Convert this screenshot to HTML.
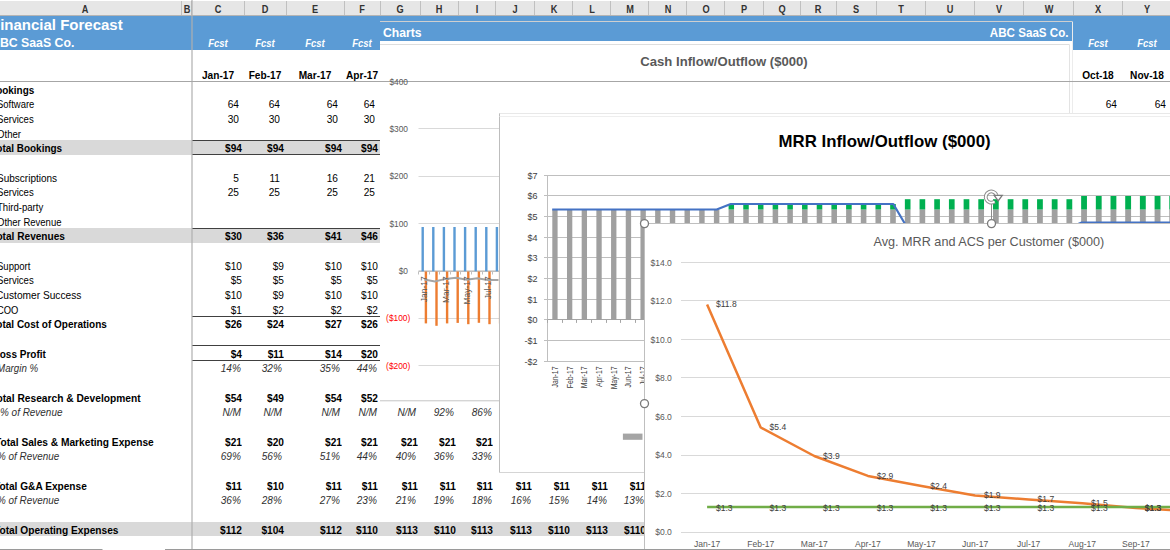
<!DOCTYPE html>
<html><head><meta charset="utf-8"><style>
*{margin:0;padding:0}
body{width:1170px;height:550px;overflow:hidden;position:relative;background:#fff;font-family:"Liberation Sans",sans-serif}
.ch{position:absolute;top:3px;width:40px;text-align:center;font-size:10px;line-height:13px;color:#333;font-weight:bold;transform:scaleX(.92)}
.t{position:absolute;white-space:nowrap;font-size:11px;line-height:14.667px;color:#000;transform:scaleX(.92);transform-origin:left center}
.c{position:absolute;width:60px;text-align:center;white-space:nowrap;font-size:11px;line-height:14px;transform:scaleX(.92)}
.r{position:absolute;width:80px;text-align:right;white-space:nowrap;font-size:11px;line-height:14.667px;color:#000;transform:scaleX(.92);transform-origin:right center}
.b{font-weight:bold}
.it{font-style:italic;color:#303030}
</style></head>
<body>
<div style="position:absolute;left:0;top:0;width:1170px;height:16px;background:#e6e6e6;border-top:1px solid #fff;box-sizing:border-box"></div>
<div style="position:absolute;left:0;top:15px;width:1170px;height:1px;background:#b4b4b4"></div>
<div style="position:absolute;left:181.0px;top:1px;width:1px;height:14px;background:#c0c0c0"></div>
<div class="ch" style="left:64.8px">A</div>
<div style="position:absolute;left:191.0px;top:1px;width:1px;height:14px;background:#c0c0c0"></div>
<div class="ch" style="left:166.5px">B</div>
<div style="position:absolute;left:244.1px;top:1px;width:1px;height:14px;background:#c0c0c0"></div>
<div class="ch" style="left:198.1px">C</div>
<div style="position:absolute;left:285.7px;top:1px;width:1px;height:14px;background:#c0c0c0"></div>
<div class="ch" style="left:245.4px">D</div>
<div style="position:absolute;left:343.5px;top:1px;width:1px;height:14px;background:#c0c0c0"></div>
<div class="ch" style="left:295.1px">E</div>
<div style="position:absolute;left:380.0px;top:1px;width:1px;height:14px;background:#c0c0c0"></div>
<div class="ch" style="left:342.2px">F</div>
<div style="position:absolute;left:419.5px;top:1px;width:1px;height:14px;background:#c0c0c0"></div>
<div class="ch" style="left:380.2px">G</div>
<div style="position:absolute;left:457.5px;top:1px;width:1px;height:14px;background:#c0c0c0"></div>
<div class="ch" style="left:419.0px">H</div>
<div style="position:absolute;left:495.1px;top:1px;width:1px;height:14px;background:#c0c0c0"></div>
<div class="ch" style="left:456.8px">I</div>
<div style="position:absolute;left:534.0px;top:1px;width:1px;height:14px;background:#c0c0c0"></div>
<div class="ch" style="left:495.0px">J</div>
<div style="position:absolute;left:572.0px;top:1px;width:1px;height:14px;background:#c0c0c0"></div>
<div class="ch" style="left:533.5px">K</div>
<div style="position:absolute;left:610.3px;top:1px;width:1px;height:14px;background:#c0c0c0"></div>
<div class="ch" style="left:571.6px">L</div>
<div style="position:absolute;left:647.9px;top:1px;width:1px;height:14px;background:#c0c0c0"></div>
<div class="ch" style="left:609.6px">M</div>
<div style="position:absolute;left:686.2px;top:1px;width:1px;height:14px;background:#c0c0c0"></div>
<div class="ch" style="left:647.5px">N</div>
<div style="position:absolute;left:724.1px;top:1px;width:1px;height:14px;background:#c0c0c0"></div>
<div class="ch" style="left:685.7px">O</div>
<div style="position:absolute;left:762.5px;top:1px;width:1px;height:14px;background:#c0c0c0"></div>
<div class="ch" style="left:723.8px">P</div>
<div style="position:absolute;left:799.5px;top:1px;width:1px;height:14px;background:#c0c0c0"></div>
<div class="ch" style="left:761.5px">Q</div>
<div style="position:absolute;left:836.2px;top:1px;width:1px;height:14px;background:#c0c0c0"></div>
<div class="ch" style="left:798.4px">R</div>
<div style="position:absolute;left:875.5px;top:1px;width:1px;height:14px;background:#c0c0c0"></div>
<div class="ch" style="left:836.4px">S</div>
<div style="position:absolute;left:925.1px;top:1px;width:1px;height:14px;background:#c0c0c0"></div>
<div class="ch" style="left:880.8px">T</div>
<div style="position:absolute;left:973.9px;top:1px;width:1px;height:14px;background:#c0c0c0"></div>
<div class="ch" style="left:930.0px">U</div>
<div style="position:absolute;left:1023.2px;top:1px;width:1px;height:14px;background:#c0c0c0"></div>
<div class="ch" style="left:979.0px">V</div>
<div style="position:absolute;left:1073.1px;top:1px;width:1px;height:14px;background:#c0c0c0"></div>
<div class="ch" style="left:1028.7px">W</div>
<div style="position:absolute;left:1122.3px;top:1px;width:1px;height:14px;background:#c0c0c0"></div>
<div class="ch" style="left:1078.2px">X</div>
<div class="ch" style="left:1127.4px">Y</div>
<div style="position:absolute;left:0;top:16px;width:1170px;height:34px;background:#5b9bd5"></div>
<div class="t" style="left:-9px;top:16px;font-size:15px;font-weight:bold;color:#fff;line-height:18px;transform:none">Financial Forecast</div>
<div class="t" style="left:-9px;top:36px;font-size:12.3px;font-weight:bold;color:#fff;line-height:14px;transform:none">ABC SaaS Co.</div>
<div class="c" style="left:188.1px;top:36px;color:#fff;font-style:italic;font-weight:bold;transform:scaleX(.86)">Fcst</div>
<div class="c" style="left:235.4px;top:36px;color:#fff;font-style:italic;font-weight:bold;transform:scaleX(.86)">Fcst</div>
<div class="c" style="left:285.1px;top:36px;color:#fff;font-style:italic;font-weight:bold;transform:scaleX(.86)">Fcst</div>
<div class="c" style="left:332.2px;top:36px;color:#fff;font-style:italic;font-weight:bold;transform:scaleX(.86)">Fcst</div>
<div class="c" style="left:1068.2px;top:36px;color:#fff;font-style:italic;font-weight:bold;transform:scaleX(.86)">Fcst</div>
<div class="c" style="left:1117.4px;top:36px;color:#fff;font-style:italic;font-weight:bold;transform:scaleX(.86)">Fcst</div>
<div class="c b" style="left:188.1px;top:68px">Jan-17</div>
<div class="c b" style="left:235.4px;top:68px">Feb-17</div>
<div class="c b" style="left:285.1px;top:68px">Mar-17</div>
<div class="c b" style="left:332.2px;top:68px">Apr-17</div>
<div class="c b" style="left:1068.2px;top:68px">Oct-18</div>
<div class="c b" style="left:1117.4px;top:68px">Nov-18</div>
<div style="position:absolute;left:0;top:81px;width:1170px;height:1px;background:#a6a6a6"></div>
<div style="position:absolute;left:0;top:140.2px;width:380.5px;height:14.67px;background:#d9d9d9"></div>
<div style="position:absolute;left:0;top:228.2px;width:380.5px;height:14.67px;background:#d9d9d9"></div>
<div style="position:absolute;left:0;top:521.5px;width:648.4px;height:14.67px;background:#d9d9d9"></div>
<div style="position:absolute;left:191.5px;top:139.7px;width:189.0px;height:1px;background:#404040"></div>
<div style="position:absolute;left:191.5px;top:227.7px;width:189.0px;height:1px;background:#404040"></div>
<div style="position:absolute;left:191.5px;top:315.7px;width:189.0px;height:1px;background:#404040"></div>
<div style="position:absolute;left:191.5px;top:345.0px;width:189.0px;height:1px;background:#404040"></div>
<div style="position:absolute;left:191.5px;top:154.3px;width:189.0px;height:1px;background:#404040"></div>
<div style="position:absolute;left:191.5px;top:359.7px;width:189.0px;height:1px;background:#404040"></div>
<div class="t b" style="left:-11.1px;top:82.5px;transform:scaleX(0.904)">Bookings</div>
<div class="t" style="left:-3px;top:97.2px;transform:scaleX(0.859)">Software</div>
<div class="r" style="left:158.6px;top:97.2px">64</div>
<div class="r" style="left:200.2px;top:97.2px">64</div>
<div class="r" style="left:258.0px;top:97.2px">64</div>
<div class="r" style="left:294.5px;top:97.2px">64</div>
<div class="t" style="left:-3px;top:111.8px;transform:scaleX(0.87)">Services</div>
<div class="r" style="left:158.6px;top:111.8px">30</div>
<div class="r" style="left:200.2px;top:111.8px">30</div>
<div class="r" style="left:258.0px;top:111.8px">30</div>
<div class="r" style="left:294.5px;top:111.8px">30</div>
<div class="t" style="left:-3px;top:126.5px;transform:scaleX(0.872)">Other</div>
<div class="t b" style="left:-9px;top:141.2px;transform:scaleX(0.904)">Total Bookings</div>
<div class="r b" style="left:162.1px;top:141.2px">$94</div>
<div class="r b" style="left:203.7px;top:141.2px">$94</div>
<div class="r b" style="left:261.5px;top:141.2px">$94</div>
<div class="r b" style="left:298.0px;top:141.2px">$94</div>
<div class="t" style="left:-3px;top:170.5px;transform:scaleX(0.91)">Subscriptions</div>
<div class="r" style="left:158.6px;top:170.5px">5</div>
<div class="r" style="left:200.2px;top:170.5px">11</div>
<div class="r" style="left:258.0px;top:170.5px">16</div>
<div class="r" style="left:294.5px;top:170.5px">21</div>
<div class="t" style="left:-3px;top:185.2px;transform:scaleX(0.87)">Services</div>
<div class="r" style="left:158.6px;top:185.2px">25</div>
<div class="r" style="left:200.2px;top:185.2px">25</div>
<div class="r" style="left:258.0px;top:185.2px">25</div>
<div class="r" style="left:294.5px;top:185.2px">25</div>
<div class="t" style="left:-3px;top:199.8px;transform:scaleX(0.869)">Third-party</div>
<div class="t" style="left:-3px;top:214.5px;transform:scaleX(0.864)">Other Revenue</div>
<div class="t b" style="left:-9px;top:229.2px;transform:scaleX(0.919)">Total Revenues</div>
<div class="r b" style="left:162.1px;top:229.2px">$30</div>
<div class="r b" style="left:203.7px;top:229.2px">$36</div>
<div class="r b" style="left:261.5px;top:229.2px">$41</div>
<div class="r b" style="left:298.0px;top:229.2px">$46</div>
<div class="t" style="left:-3px;top:258.5px;transform:scaleX(0.867)">Support</div>
<div class="r" style="left:162.1px;top:258.5px">$10</div>
<div class="r" style="left:203.7px;top:258.5px">$9</div>
<div class="r" style="left:261.5px;top:258.5px">$10</div>
<div class="r" style="left:298.0px;top:258.5px">$10</div>
<div class="t" style="left:-3px;top:273.2px;transform:scaleX(0.87)">Services</div>
<div class="r" style="left:162.1px;top:273.2px">$5</div>
<div class="r" style="left:203.7px;top:273.2px">$5</div>
<div class="r" style="left:261.5px;top:273.2px">$5</div>
<div class="r" style="left:298.0px;top:273.2px">$5</div>
<div class="t" style="left:-3.8px;top:287.8px;transform:scaleX(0.924)">Customer Success</div>
<div class="r" style="left:162.1px;top:287.8px">$10</div>
<div class="r" style="left:203.7px;top:287.8px">$9</div>
<div class="r" style="left:261.5px;top:287.8px">$10</div>
<div class="r" style="left:298.0px;top:287.8px">$10</div>
<div class="t" style="left:-3.2px;top:302.5px;transform:scaleX(0.854)">COO</div>
<div class="r" style="left:162.1px;top:302.5px">$1</div>
<div class="r" style="left:203.7px;top:302.5px">$2</div>
<div class="r" style="left:261.5px;top:302.5px">$2</div>
<div class="r" style="left:298.0px;top:302.5px">$2</div>
<div class="t b" style="left:-9.4px;top:317.2px;transform:scaleX(0.908)">Total Cost of Operations</div>
<div class="r b" style="left:162.1px;top:317.2px">$26</div>
<div class="r b" style="left:203.7px;top:317.2px">$24</div>
<div class="r b" style="left:261.5px;top:317.2px">$27</div>
<div class="r b" style="left:298.0px;top:317.2px">$26</div>
<div class="t b" style="left:-11.9px;top:346.5px;transform:scaleX(0.911)">Gross Profit</div>
<div class="r b" style="left:162.1px;top:346.5px">$4</div>
<div class="r b" style="left:203.7px;top:346.5px">$11</div>
<div class="r b" style="left:261.5px;top:346.5px">$14</div>
<div class="r b" style="left:298.0px;top:346.5px">$20</div>
<div class="t it" style="left:-3px;top:361.2px;transform:scaleX(0.887)">Margin %</div>
<div class="r it" style="left:160.6px;top:361.2px">14%</div>
<div class="r it" style="left:202.2px;top:361.2px">32%</div>
<div class="r it" style="left:260.0px;top:361.2px">35%</div>
<div class="r it" style="left:296.5px;top:361.2px">44%</div>
<div class="t b" style="left:-9px;top:390.5px;transform:scaleX(0.928)">Total Research &amp; Development</div>
<div class="r b" style="left:162.1px;top:390.5px">$54</div>
<div class="r b" style="left:203.7px;top:390.5px">$49</div>
<div class="r b" style="left:261.5px;top:390.5px">$54</div>
<div class="r b" style="left:298.0px;top:390.5px">$52</div>
<div class="t it" style="left:-0.3px;top:405.2px;transform:scaleX(0.904)">% of Revenue</div>
<div class="r it" style="left:160.6px;top:405.2px">N/M</div>
<div class="r it" style="left:202.2px;top:405.2px">N/M</div>
<div class="r it" style="left:260.0px;top:405.2px">N/M</div>
<div class="r it" style="left:296.5px;top:405.2px">N/M</div>
<div class="r it" style="left:336.0px;top:405.2px">N/M</div>
<div class="r it" style="left:374.0px;top:405.2px">92%</div>
<div class="r it" style="left:411.6px;top:405.2px">86%</div>
<div class="t b" style="left:-5.5px;top:434.5px;transform:scaleX(0.925)">Total Sales &amp; Marketing Expense</div>
<div class="r b" style="left:162.1px;top:434.5px">$21</div>
<div class="r b" style="left:203.7px;top:434.5px">$20</div>
<div class="r b" style="left:261.5px;top:434.5px">$21</div>
<div class="r b" style="left:298.0px;top:434.5px">$21</div>
<div class="r b" style="left:337.5px;top:434.5px">$21</div>
<div class="r b" style="left:375.5px;top:434.5px">$21</div>
<div class="r b" style="left:413.1px;top:434.5px">$21</div>
<div class="t it" style="left:-3.3px;top:449.2px;transform:scaleX(0.9)">% of Revenue</div>
<div class="r it" style="left:160.6px;top:449.2px">69%</div>
<div class="r it" style="left:202.2px;top:449.2px">56%</div>
<div class="r it" style="left:260.0px;top:449.2px">51%</div>
<div class="r it" style="left:296.5px;top:449.2px">44%</div>
<div class="r it" style="left:336.0px;top:449.2px">40%</div>
<div class="r it" style="left:374.0px;top:449.2px">36%</div>
<div class="r it" style="left:411.6px;top:449.2px">33%</div>
<div class="t b" style="left:-6.2px;top:478.5px;transform:scaleX(0.92)">Total G&amp;A Expense</div>
<div class="r b" style="left:162.1px;top:478.5px">$11</div>
<div class="r b" style="left:203.7px;top:478.5px">$10</div>
<div class="r b" style="left:261.5px;top:478.5px">$11</div>
<div class="r b" style="left:298.0px;top:478.5px">$11</div>
<div class="r b" style="left:337.5px;top:478.5px">$11</div>
<div class="r b" style="left:375.5px;top:478.5px">$11</div>
<div class="r b" style="left:413.1px;top:478.5px">$11</div>
<div class="r b" style="left:452.0px;top:478.5px">$11</div>
<div class="r b" style="left:490.0px;top:478.5px">$11</div>
<div class="r b" style="left:528.3px;top:478.5px">$11</div>
<div class="r b" style="left:565.9px;top:478.5px">$11</div>
<div class="t it" style="left:-3.3px;top:493.2px;transform:scaleX(0.9)">% of Revenue</div>
<div class="r it" style="left:160.6px;top:493.2px">36%</div>
<div class="r it" style="left:202.2px;top:493.2px">28%</div>
<div class="r it" style="left:260.0px;top:493.2px">27%</div>
<div class="r it" style="left:296.5px;top:493.2px">23%</div>
<div class="r it" style="left:336.0px;top:493.2px">21%</div>
<div class="r it" style="left:374.0px;top:493.2px">19%</div>
<div class="r it" style="left:411.6px;top:493.2px">18%</div>
<div class="r it" style="left:450.5px;top:493.2px">16%</div>
<div class="r it" style="left:488.5px;top:493.2px">15%</div>
<div class="r it" style="left:526.8px;top:493.2px">14%</div>
<div class="r it" style="left:564.4px;top:493.2px">13%</div>
<div class="t b" style="left:-6.1px;top:522.5px;transform:scaleX(0.923)">Total Operating Expenses</div>
<div class="r b" style="left:162.1px;top:522.5px">$112</div>
<div class="r b" style="left:203.7px;top:522.5px">$104</div>
<div class="r b" style="left:261.5px;top:522.5px">$112</div>
<div class="r b" style="left:298.0px;top:522.5px">$110</div>
<div class="r b" style="left:337.5px;top:522.5px">$113</div>
<div class="r b" style="left:375.5px;top:522.5px">$110</div>
<div class="r b" style="left:413.1px;top:522.5px">$113</div>
<div class="r b" style="left:452.0px;top:522.5px">$113</div>
<div class="r b" style="left:490.0px;top:522.5px">$110</div>
<div class="r b" style="left:528.3px;top:522.5px">$113</div>
<div class="r b" style="left:565.9px;top:522.5px">$110</div>
<div class="r" style="left:1036.8px;top:97.2px">64</div>
<div class="r" style="left:1086.0px;top:97.2px">64</div>
<div style="position:absolute;left:191px;top:0;width:1.5px;height:550px;background:rgba(175,175,175,.6)"></div>
<svg style="position:absolute;left:0;top:0" width="1170" height="550" font-family="Liberation Sans"><rect x="380.00" y="21.00" width="692.00" height="380.20" fill="#fff" stroke="none" stroke-width="1"/>
<line x1="380.00" y1="21.50" x2="1072.00" y2="21.50" stroke="#cfcfcf" stroke-width="1"/>
<rect x="380.00" y="22.00" width="692.00" height="19.00" fill="#5b9bd5" stroke="none" stroke-width="1"/>
<line x1="1072.50" y1="21.50" x2="1072.50" y2="113.00" stroke="#ececec" stroke-width="1"/>
<text transform="translate(383.00,37.20) scale(0.9,1)" font-size="13.5" fill="#fff" text-anchor="start" font-weight="bold" font-style="normal">Charts</text>
<text transform="translate(1068.50,37.20) scale(0.86,1)" font-size="13.5" fill="#fff" text-anchor="end" font-weight="bold" font-style="normal">ABC SaaS Co.</text>
<line x1="380.00" y1="44.50" x2="1069.50" y2="44.50" stroke="#dedede" stroke-width="1"/>
<line x1="1069.50" y1="44.50" x2="1069.50" y2="401.00" stroke="#e3e3e3" stroke-width="1"/>
<line x1="380.00" y1="400.50" x2="499.50" y2="400.50" stroke="#d5d5d5" stroke-width="1"/>
<line x1="380.00" y1="401.50" x2="499.50" y2="401.50" stroke="#eeeeee" stroke-width="1"/>
<line x1="0.00" y1="81.50" x2="1170.00" y2="81.50" stroke="#a6a6a6" stroke-width="1"/>
<text transform="translate(724.00,65.60)" font-size="13.1" fill="#595959" text-anchor="middle" font-weight="bold" font-style="normal">Cash Inflow/Outflow ($000)</text>
<text transform="translate(408.00,84.70) scale(0.93,1)" font-size="9" fill="#595959" text-anchor="end" font-weight="normal" font-style="normal">$400</text>
<line x1="418.50" y1="128.50" x2="1057.70" y2="128.50" stroke="#d9d9d9" stroke-width="1"/>
<text transform="translate(408.00,132.00) scale(0.93,1)" font-size="9" fill="#595959" text-anchor="end" font-weight="normal" font-style="normal">$300</text>
<line x1="418.50" y1="176.50" x2="1057.70" y2="176.50" stroke="#d9d9d9" stroke-width="1"/>
<text transform="translate(408.00,179.30) scale(0.93,1)" font-size="9" fill="#595959" text-anchor="end" font-weight="normal" font-style="normal">$200</text>
<line x1="418.50" y1="223.50" x2="1057.70" y2="223.50" stroke="#d9d9d9" stroke-width="1"/>
<text transform="translate(408.00,226.60) scale(0.93,1)" font-size="9" fill="#595959" text-anchor="end" font-weight="normal" font-style="normal">$100</text>
<line x1="418.50" y1="270.50" x2="1057.70" y2="270.50" stroke="#d9d9d9" stroke-width="1"/>
<text transform="translate(408.00,273.90) scale(0.93,1)" font-size="9" fill="#595959" text-anchor="end" font-weight="normal" font-style="normal">$0</text>
<line x1="418.50" y1="318.50" x2="1057.70" y2="318.50" stroke="#d9d9d9" stroke-width="1"/>
<text transform="translate(410.30,321.20) scale(0.93,1)" font-size="9" fill="#ff0000" text-anchor="end" font-weight="normal" font-style="normal">($100)</text>
<line x1="418.50" y1="365.50" x2="1057.70" y2="365.50" stroke="#d9d9d9" stroke-width="1"/>
<text transform="translate(410.30,368.50) scale(0.93,1)" font-size="9" fill="#ff0000" text-anchor="end" font-weight="normal" font-style="normal">($200)</text>
<line x1="418.50" y1="271.50" x2="1057.70" y2="271.50" stroke="#bfbfbf" stroke-width="1"/>
<line x1="418.50" y1="271.50" x2="418.50" y2="274.50" stroke="#bfbfbf" stroke-width="1"/>
<line x1="429.50" y1="271.50" x2="429.50" y2="274.50" stroke="#bfbfbf" stroke-width="1"/>
<line x1="439.50" y1="271.50" x2="439.50" y2="274.50" stroke="#bfbfbf" stroke-width="1"/>
<line x1="450.50" y1="271.50" x2="450.50" y2="274.50" stroke="#bfbfbf" stroke-width="1"/>
<line x1="460.50" y1="271.50" x2="460.50" y2="274.50" stroke="#bfbfbf" stroke-width="1"/>
<line x1="471.50" y1="271.50" x2="471.50" y2="274.50" stroke="#bfbfbf" stroke-width="1"/>
<line x1="482.50" y1="271.50" x2="482.50" y2="274.50" stroke="#bfbfbf" stroke-width="1"/>
<line x1="492.50" y1="271.50" x2="492.50" y2="274.50" stroke="#bfbfbf" stroke-width="1"/>
<line x1="503.50" y1="271.50" x2="503.50" y2="274.50" stroke="#bfbfbf" stroke-width="1"/>
<rect x="421.50" y="227.00" width="2.40" height="44.30" fill="#5b9bd5" stroke="none" stroke-width="1"/>
<rect x="424.70" y="271.50" width="2.40" height="51.90" fill="#ed7d31" stroke="none" stroke-width="1"/>
<rect x="432.10" y="227.00" width="2.40" height="44.30" fill="#5b9bd5" stroke="none" stroke-width="1"/>
<rect x="435.30" y="271.50" width="2.40" height="54.30" fill="#ed7d31" stroke="none" stroke-width="1"/>
<rect x="442.70" y="227.00" width="2.40" height="44.30" fill="#5b9bd5" stroke="none" stroke-width="1"/>
<rect x="445.90" y="271.50" width="2.40" height="51.90" fill="#ed7d31" stroke="none" stroke-width="1"/>
<rect x="453.30" y="227.00" width="2.40" height="44.30" fill="#5b9bd5" stroke="none" stroke-width="1"/>
<rect x="456.50" y="271.50" width="2.40" height="51.40" fill="#ed7d31" stroke="none" stroke-width="1"/>
<rect x="463.90" y="227.00" width="2.40" height="44.30" fill="#5b9bd5" stroke="none" stroke-width="1"/>
<rect x="467.10" y="271.50" width="2.40" height="52.70" fill="#ed7d31" stroke="none" stroke-width="1"/>
<rect x="474.50" y="227.00" width="2.40" height="44.30" fill="#5b9bd5" stroke="none" stroke-width="1"/>
<rect x="477.70" y="271.50" width="2.40" height="51.30" fill="#ed7d31" stroke="none" stroke-width="1"/>
<rect x="485.10" y="227.00" width="2.40" height="44.30" fill="#5b9bd5" stroke="none" stroke-width="1"/>
<rect x="488.30" y="271.50" width="2.40" height="52.70" fill="#ed7d31" stroke="none" stroke-width="1"/>
<rect x="495.70" y="227.00" width="2.40" height="44.30" fill="#5b9bd5" stroke="none" stroke-width="1"/>
<rect x="498.90" y="271.50" width="2.40" height="52.00" fill="#ed7d31" stroke="none" stroke-width="1"/>
<polyline points="424.3,279.4 434.9,281.5 445.5,278.9 456.1,277.8 466.7,279.8 477.3,278.3 487.9,280.1 498.5,280.0" fill="none" stroke="#a5a5a5" stroke-width="2"/>
<text transform="translate(427.30,276.30) rotate(-90) scale(0.92,1)" font-size="9.2" fill="#595959" text-anchor="end" font-weight="normal" font-style="normal">Jan-17</text>
<text transform="translate(448.50,276.30) rotate(-90) scale(0.92,1)" font-size="9.2" fill="#595959" text-anchor="end" font-weight="normal" font-style="normal">Mar-17</text>
<text transform="translate(469.70,276.30) rotate(-90) scale(0.92,1)" font-size="9.2" fill="#595959" text-anchor="end" font-weight="normal" font-style="normal">May-17</text>
<text transform="translate(490.90,276.30) rotate(-90) scale(0.92,1)" font-size="9.2" fill="#595959" text-anchor="end" font-weight="normal" font-style="normal">Jul-17</text>
<rect x="499.50" y="113.60" width="700.00" height="358.60" fill="#fff" stroke="none" stroke-width="1"/>
<line x1="499.50" y1="113.00" x2="499.50" y2="472.70" stroke="#bdbdbd" stroke-width="1"/>
<line x1="499.50" y1="113.50" x2="1170.00" y2="113.50" stroke="#e8e8e8" stroke-width="1"/>
<line x1="499.50" y1="116.50" x2="1170.00" y2="116.50" stroke="#eeeeee" stroke-width="1"/>
<line x1="499.50" y1="472.50" x2="644.50" y2="472.50" stroke="#d5d5d5" stroke-width="1"/>
<text transform="translate(884.60,146.60) scale(1.02,1)" font-size="16.5" fill="#000" text-anchor="middle" font-weight="bold" font-style="normal">MRR Inflow/Outflow ($000)</text>
<line x1="544.00" y1="175.50" x2="1170.00" y2="175.50" stroke="#bfbfbf" stroke-width="1"/>
<text transform="translate(537.50,178.50) scale(0.95,1)" font-size="9.5" fill="#404040" text-anchor="end" font-weight="normal" font-style="normal">$7</text>
<line x1="544.00" y1="195.50" x2="1170.00" y2="195.50" stroke="#bfbfbf" stroke-width="1"/>
<text transform="translate(537.50,199.18) scale(0.95,1)" font-size="9.5" fill="#404040" text-anchor="end" font-weight="normal" font-style="normal">$6</text>
<line x1="544.00" y1="216.50" x2="1170.00" y2="216.50" stroke="#bfbfbf" stroke-width="1"/>
<text transform="translate(537.50,219.86) scale(0.95,1)" font-size="9.5" fill="#404040" text-anchor="end" font-weight="normal" font-style="normal">$5</text>
<line x1="544.00" y1="237.50" x2="1170.00" y2="237.50" stroke="#bfbfbf" stroke-width="1"/>
<text transform="translate(537.50,240.54) scale(0.95,1)" font-size="9.5" fill="#404040" text-anchor="end" font-weight="normal" font-style="normal">$4</text>
<line x1="544.00" y1="257.50" x2="1170.00" y2="257.50" stroke="#bfbfbf" stroke-width="1"/>
<text transform="translate(537.50,261.22) scale(0.95,1)" font-size="9.5" fill="#404040" text-anchor="end" font-weight="normal" font-style="normal">$3</text>
<line x1="544.00" y1="278.50" x2="1170.00" y2="278.50" stroke="#bfbfbf" stroke-width="1"/>
<text transform="translate(537.50,281.90) scale(0.95,1)" font-size="9.5" fill="#404040" text-anchor="end" font-weight="normal" font-style="normal">$2</text>
<line x1="544.00" y1="299.50" x2="1170.00" y2="299.50" stroke="#bfbfbf" stroke-width="1"/>
<text transform="translate(537.50,302.58) scale(0.95,1)" font-size="9.5" fill="#404040" text-anchor="end" font-weight="normal" font-style="normal">$1</text>
<line x1="544.00" y1="319.50" x2="1170.00" y2="319.50" stroke="#bfbfbf" stroke-width="1"/>
<text transform="translate(537.50,323.26) scale(0.95,1)" font-size="9.5" fill="#404040" text-anchor="end" font-weight="normal" font-style="normal">$0</text>
<line x1="544.00" y1="340.50" x2="1170.00" y2="340.50" stroke="#bfbfbf" stroke-width="1"/>
<text transform="translate(537.50,343.94) scale(0.95,1)" font-size="9.5" fill="#404040" text-anchor="end" font-weight="normal" font-style="normal">-$1</text>
<line x1="544.00" y1="361.50" x2="1170.00" y2="361.50" stroke="#bfbfbf" stroke-width="1"/>
<text transform="translate(537.50,364.62) scale(0.95,1)" font-size="9.5" fill="#404040" text-anchor="end" font-weight="normal" font-style="normal">-$2</text>
<line x1="547.50" y1="175.00" x2="547.50" y2="361.10" stroke="#bfbfbf" stroke-width="1"/>
<line x1="547.50" y1="319.50" x2="1170.00" y2="319.50" stroke="#a6a6a6" stroke-width="1"/>
<line x1="547.50" y1="319.80" x2="547.50" y2="322.90" stroke="#a6a6a6" stroke-width="1"/>
<line x1="562.50" y1="319.80" x2="562.50" y2="322.90" stroke="#a6a6a6" stroke-width="1"/>
<line x1="576.50" y1="319.80" x2="576.50" y2="322.90" stroke="#a6a6a6" stroke-width="1"/>
<line x1="591.50" y1="319.80" x2="591.50" y2="322.90" stroke="#a6a6a6" stroke-width="1"/>
<line x1="606.50" y1="319.80" x2="606.50" y2="322.90" stroke="#a6a6a6" stroke-width="1"/>
<line x1="620.50" y1="319.80" x2="620.50" y2="322.90" stroke="#a6a6a6" stroke-width="1"/>
<line x1="635.50" y1="319.80" x2="635.50" y2="322.90" stroke="#a6a6a6" stroke-width="1"/>
<line x1="650.50" y1="319.80" x2="650.50" y2="322.90" stroke="#a6a6a6" stroke-width="1"/>
<rect x="552.30" y="209.50" width="5.30" height="110.30" fill="#a0a0a0" stroke="none" stroke-width="1"/>
<rect x="566.99" y="209.50" width="5.31" height="110.30" fill="#a0a0a0" stroke="none" stroke-width="1"/>
<rect x="581.68" y="209.50" width="5.33" height="110.30" fill="#a0a0a0" stroke="none" stroke-width="1"/>
<rect x="596.37" y="209.50" width="5.34" height="110.30" fill="#a0a0a0" stroke="none" stroke-width="1"/>
<rect x="611.06" y="209.50" width="5.36" height="110.30" fill="#a0a0a0" stroke="none" stroke-width="1"/>
<rect x="625.75" y="209.50" width="5.37" height="110.30" fill="#a0a0a0" stroke="none" stroke-width="1"/>
<rect x="640.44" y="209.50" width="5.39" height="110.30" fill="#a0a0a0" stroke="none" stroke-width="1"/>
<rect x="655.13" y="209.50" width="5.40" height="110.30" fill="#a0a0a0" stroke="none" stroke-width="1"/>
<rect x="669.82" y="209.50" width="5.41" height="110.30" fill="#a0a0a0" stroke="none" stroke-width="1"/>
<rect x="684.51" y="209.50" width="5.43" height="110.30" fill="#a0a0a0" stroke="none" stroke-width="1"/>
<rect x="699.20" y="209.50" width="5.44" height="110.30" fill="#a0a0a0" stroke="none" stroke-width="1"/>
<rect x="713.89" y="209.50" width="5.46" height="110.30" fill="#a0a0a0" stroke="none" stroke-width="1"/>
<rect x="728.58" y="209.50" width="5.47" height="110.30" fill="#a0a0a0" stroke="none" stroke-width="1"/>
<rect x="728.58" y="204.00" width="5.47" height="5.50" fill="#00b050" stroke="none" stroke-width="1"/>
<rect x="743.27" y="209.50" width="5.49" height="110.30" fill="#a0a0a0" stroke="none" stroke-width="1"/>
<rect x="743.27" y="204.00" width="5.49" height="5.50" fill="#00b050" stroke="none" stroke-width="1"/>
<rect x="757.96" y="209.50" width="5.50" height="110.30" fill="#a0a0a0" stroke="none" stroke-width="1"/>
<rect x="757.96" y="204.00" width="5.50" height="5.50" fill="#00b050" stroke="none" stroke-width="1"/>
<rect x="772.65" y="209.50" width="5.51" height="110.30" fill="#a0a0a0" stroke="none" stroke-width="1"/>
<rect x="772.65" y="204.00" width="5.51" height="5.50" fill="#00b050" stroke="none" stroke-width="1"/>
<rect x="787.34" y="209.50" width="5.53" height="110.30" fill="#a0a0a0" stroke="none" stroke-width="1"/>
<rect x="787.34" y="204.00" width="5.53" height="5.50" fill="#00b050" stroke="none" stroke-width="1"/>
<rect x="802.03" y="209.50" width="5.54" height="110.30" fill="#a0a0a0" stroke="none" stroke-width="1"/>
<rect x="802.03" y="204.00" width="5.54" height="5.50" fill="#00b050" stroke="none" stroke-width="1"/>
<rect x="816.72" y="209.50" width="5.56" height="110.30" fill="#a0a0a0" stroke="none" stroke-width="1"/>
<rect x="816.72" y="204.00" width="5.56" height="5.50" fill="#00b050" stroke="none" stroke-width="1"/>
<rect x="831.41" y="209.50" width="5.57" height="110.30" fill="#a0a0a0" stroke="none" stroke-width="1"/>
<rect x="831.41" y="204.00" width="5.57" height="5.50" fill="#00b050" stroke="none" stroke-width="1"/>
<rect x="846.10" y="209.50" width="5.59" height="110.30" fill="#a0a0a0" stroke="none" stroke-width="1"/>
<rect x="846.10" y="204.00" width="5.59" height="5.50" fill="#00b050" stroke="none" stroke-width="1"/>
<rect x="860.79" y="209.50" width="5.60" height="110.30" fill="#a0a0a0" stroke="none" stroke-width="1"/>
<rect x="860.79" y="204.00" width="5.60" height="5.50" fill="#00b050" stroke="none" stroke-width="1"/>
<rect x="875.48" y="209.50" width="5.61" height="110.30" fill="#a0a0a0" stroke="none" stroke-width="1"/>
<rect x="875.48" y="204.00" width="5.61" height="5.50" fill="#00b050" stroke="none" stroke-width="1"/>
<rect x="890.17" y="209.50" width="5.63" height="110.30" fill="#a0a0a0" stroke="none" stroke-width="1"/>
<rect x="890.17" y="204.00" width="5.63" height="5.50" fill="#00b050" stroke="none" stroke-width="1"/>
<rect x="904.86" y="209.50" width="5.64" height="110.30" fill="#a0a0a0" stroke="none" stroke-width="1"/>
<rect x="904.86" y="199.20" width="5.64" height="10.30" fill="#00b050" stroke="none" stroke-width="1"/>
<rect x="919.55" y="209.50" width="5.66" height="110.30" fill="#a0a0a0" stroke="none" stroke-width="1"/>
<rect x="919.55" y="199.20" width="5.66" height="10.30" fill="#00b050" stroke="none" stroke-width="1"/>
<rect x="934.24" y="209.50" width="5.67" height="110.30" fill="#a0a0a0" stroke="none" stroke-width="1"/>
<rect x="934.24" y="199.20" width="5.67" height="10.30" fill="#00b050" stroke="none" stroke-width="1"/>
<rect x="948.93" y="209.50" width="5.69" height="110.30" fill="#a0a0a0" stroke="none" stroke-width="1"/>
<rect x="948.93" y="199.20" width="5.69" height="10.30" fill="#00b050" stroke="none" stroke-width="1"/>
<rect x="963.62" y="209.50" width="5.70" height="110.30" fill="#a0a0a0" stroke="none" stroke-width="1"/>
<rect x="963.62" y="199.20" width="5.70" height="10.30" fill="#00b050" stroke="none" stroke-width="1"/>
<rect x="978.31" y="209.50" width="5.71" height="110.30" fill="#a0a0a0" stroke="none" stroke-width="1"/>
<rect x="978.31" y="199.20" width="5.71" height="10.30" fill="#00b050" stroke="none" stroke-width="1"/>
<rect x="993.00" y="209.50" width="5.73" height="110.30" fill="#a0a0a0" stroke="none" stroke-width="1"/>
<rect x="993.00" y="199.20" width="5.73" height="10.30" fill="#00b050" stroke="none" stroke-width="1"/>
<rect x="1007.69" y="209.50" width="5.74" height="110.30" fill="#a0a0a0" stroke="none" stroke-width="1"/>
<rect x="1007.69" y="199.20" width="5.74" height="10.30" fill="#00b050" stroke="none" stroke-width="1"/>
<rect x="1022.38" y="209.50" width="5.76" height="110.30" fill="#a0a0a0" stroke="none" stroke-width="1"/>
<rect x="1022.38" y="199.20" width="5.76" height="10.30" fill="#00b050" stroke="none" stroke-width="1"/>
<rect x="1037.07" y="209.50" width="5.77" height="110.30" fill="#a0a0a0" stroke="none" stroke-width="1"/>
<rect x="1037.07" y="199.20" width="5.77" height="10.30" fill="#00b050" stroke="none" stroke-width="1"/>
<rect x="1051.76" y="209.50" width="5.79" height="110.30" fill="#a0a0a0" stroke="none" stroke-width="1"/>
<rect x="1051.76" y="199.20" width="5.79" height="10.30" fill="#00b050" stroke="none" stroke-width="1"/>
<rect x="1066.45" y="209.50" width="5.80" height="110.30" fill="#a0a0a0" stroke="none" stroke-width="1"/>
<rect x="1066.45" y="199.20" width="5.80" height="10.30" fill="#00b050" stroke="none" stroke-width="1"/>
<rect x="1081.14" y="209.50" width="5.81" height="110.30" fill="#a0a0a0" stroke="none" stroke-width="1"/>
<rect x="1081.14" y="196.00" width="5.81" height="13.50" fill="#00b050" stroke="none" stroke-width="1"/>
<rect x="1095.83" y="209.50" width="5.83" height="110.30" fill="#a0a0a0" stroke="none" stroke-width="1"/>
<rect x="1095.83" y="196.00" width="5.83" height="13.50" fill="#00b050" stroke="none" stroke-width="1"/>
<rect x="1110.52" y="209.50" width="5.84" height="110.30" fill="#a0a0a0" stroke="none" stroke-width="1"/>
<rect x="1110.52" y="196.00" width="5.84" height="13.50" fill="#00b050" stroke="none" stroke-width="1"/>
<rect x="1125.21" y="209.50" width="5.86" height="110.30" fill="#a0a0a0" stroke="none" stroke-width="1"/>
<rect x="1125.21" y="196.00" width="5.86" height="13.50" fill="#00b050" stroke="none" stroke-width="1"/>
<rect x="1139.90" y="209.50" width="5.87" height="110.30" fill="#a0a0a0" stroke="none" stroke-width="1"/>
<rect x="1139.90" y="196.00" width="5.87" height="13.50" fill="#00b050" stroke="none" stroke-width="1"/>
<rect x="1154.59" y="209.50" width="5.89" height="110.30" fill="#a0a0a0" stroke="none" stroke-width="1"/>
<rect x="1154.59" y="196.00" width="5.89" height="13.50" fill="#00b050" stroke="none" stroke-width="1"/>
<rect x="1169.28" y="209.50" width="5.90" height="110.30" fill="#a0a0a0" stroke="none" stroke-width="1"/>
<rect x="1169.28" y="196.00" width="5.90" height="13.50" fill="#00b050" stroke="none" stroke-width="1"/>
<polyline points="552.2,209.5 716.7,209.5 730.7,204.0 893.3,204.0 908.0,229.0 1066.7,229.0 1081.7,222.6 1170.0,222.6" fill="none" stroke="#4472c4" stroke-width="2.2" stroke-linejoin="round"/>
<text transform="translate(558.00,366.50) rotate(-90) scale(0.78,1)" font-size="8.8" fill="#404040" text-anchor="end" font-weight="normal" font-style="normal">Jan-17</text>
<text transform="translate(572.65,366.50) rotate(-90) scale(0.78,1)" font-size="8.8" fill="#404040" text-anchor="end" font-weight="normal" font-style="normal">Feb-17</text>
<text transform="translate(587.30,366.50) rotate(-90) scale(0.78,1)" font-size="8.8" fill="#404040" text-anchor="end" font-weight="normal" font-style="normal">Mar-17</text>
<text transform="translate(601.95,366.50) rotate(-90) scale(0.78,1)" font-size="8.8" fill="#404040" text-anchor="end" font-weight="normal" font-style="normal">Apr-17</text>
<text transform="translate(616.60,366.50) rotate(-90) scale(0.78,1)" font-size="8.8" fill="#404040" text-anchor="end" font-weight="normal" font-style="normal">May-17</text>
<text transform="translate(631.25,366.50) rotate(-90) scale(0.78,1)" font-size="8.8" fill="#404040" text-anchor="end" font-weight="normal" font-style="normal">Jun-17</text>
<text transform="translate(645.90,366.50) rotate(-90) scale(0.78,1)" font-size="8.8" fill="#404040" text-anchor="end" font-weight="normal" font-style="normal">Jul-17</text>
<rect x="622.90" y="433.60" width="19.60" height="6.20" fill="#a5a5a5" stroke="none" stroke-width="1"/>
<rect x="644.50" y="223.30" width="600.00" height="340.00" fill="#fff" stroke="none" stroke-width="1"/>
<line x1="644.50" y1="223.50" x2="1170.00" y2="223.50" stroke="#bfbfbf" stroke-width="1"/>
<line x1="644.50" y1="223.30" x2="644.50" y2="550.00" stroke="#bfbfbf" stroke-width="1"/>
<text transform="translate(988.90,245.70) scale(0.944,1)" font-size="13.4" fill="#595959" text-anchor="middle" font-weight="normal" font-style="normal">Avg. MRR and ACS per Customer ($000)</text>
<line x1="681.00" y1="262.50" x2="1170.00" y2="262.50" stroke="#d9d9d9" stroke-width="1"/>
<text transform="translate(671.80,265.50) scale(0.93,1)" font-size="9.2" fill="#595959" text-anchor="end" font-weight="normal" font-style="normal">$14.0</text>
<line x1="681.00" y1="300.50" x2="1170.00" y2="300.50" stroke="#d9d9d9" stroke-width="1"/>
<text transform="translate(671.80,304.07) scale(0.93,1)" font-size="9.2" fill="#595959" text-anchor="end" font-weight="normal" font-style="normal">$12.0</text>
<line x1="681.00" y1="339.50" x2="1170.00" y2="339.50" stroke="#d9d9d9" stroke-width="1"/>
<text transform="translate(671.80,342.64) scale(0.93,1)" font-size="9.2" fill="#595959" text-anchor="end" font-weight="normal" font-style="normal">$10.0</text>
<line x1="681.00" y1="377.50" x2="1170.00" y2="377.50" stroke="#d9d9d9" stroke-width="1"/>
<text transform="translate(671.80,381.21) scale(0.93,1)" font-size="9.2" fill="#595959" text-anchor="end" font-weight="normal" font-style="normal">$8.0</text>
<line x1="681.00" y1="416.50" x2="1170.00" y2="416.50" stroke="#d9d9d9" stroke-width="1"/>
<text transform="translate(671.80,419.78) scale(0.93,1)" font-size="9.2" fill="#595959" text-anchor="end" font-weight="normal" font-style="normal">$6.0</text>
<line x1="681.00" y1="455.50" x2="1170.00" y2="455.50" stroke="#d9d9d9" stroke-width="1"/>
<text transform="translate(671.80,458.35) scale(0.93,1)" font-size="9.2" fill="#595959" text-anchor="end" font-weight="normal" font-style="normal">$4.0</text>
<line x1="681.00" y1="493.50" x2="1170.00" y2="493.50" stroke="#d9d9d9" stroke-width="1"/>
<text transform="translate(671.80,496.92) scale(0.93,1)" font-size="9.2" fill="#595959" text-anchor="end" font-weight="normal" font-style="normal">$2.0</text>
<line x1="681.00" y1="532.50" x2="1170.00" y2="532.50" stroke="#d9d9d9" stroke-width="1"/>
<text transform="translate(671.80,535.49) scale(0.93,1)" font-size="9.2" fill="#595959" text-anchor="end" font-weight="normal" font-style="normal">$0.0</text>
<polyline points="707.1,304.6 760.7,427.5 814.3,456.0 867.9,475.9 921.5,485.9 975.1,495.6 1028.7,499.4 1082.3,503.3 1135.9,508.1 1189.5,511.0" fill="none" stroke="#ed7d31" stroke-width="2.5" stroke-linejoin="round"/>
<polyline points="707.1,507.1 1170,507.1" fill="none" stroke="#70ad47" stroke-width="2.5"/>
<text transform="translate(715.90,307.34) scale(0.93,1)" font-size="9.2" fill="#404040" text-anchor="start" font-weight="normal" font-style="normal">$11.8</text>
<text transform="translate(769.50,430.18) scale(0.93,1)" font-size="9.2" fill="#404040" text-anchor="start" font-weight="normal" font-style="normal">$5.4</text>
<text transform="translate(823.10,458.72) scale(0.93,1)" font-size="9.2" fill="#404040" text-anchor="start" font-weight="normal" font-style="normal">$3.9</text>
<text transform="translate(876.70,478.59) scale(0.93,1)" font-size="9.2" fill="#404040" text-anchor="start" font-weight="normal" font-style="normal">$2.9</text>
<text transform="translate(930.30,488.62) scale(0.93,1)" font-size="9.2" fill="#404040" text-anchor="start" font-weight="normal" font-style="normal">$2.4</text>
<text transform="translate(983.90,498.26) scale(0.93,1)" font-size="9.2" fill="#404040" text-anchor="start" font-weight="normal" font-style="normal">$1.9</text>
<text transform="translate(1037.50,502.12) scale(0.93,1)" font-size="9.2" fill="#404040" text-anchor="start" font-weight="normal" font-style="normal">$1.7</text>
<text transform="translate(1091.10,505.97) scale(0.93,1)" font-size="9.2" fill="#404040" text-anchor="start" font-weight="normal" font-style="normal">$1.5</text>
<text transform="translate(1144.70,510.79) scale(0.93,1)" font-size="9.2" fill="#404040" text-anchor="start" font-weight="normal" font-style="normal">$1.3</text>
<text transform="translate(715.90,510.53) scale(0.93,1)" font-size="9.2" fill="#404040" text-anchor="start" font-weight="normal" font-style="normal">$1.3</text>
<text transform="translate(769.50,510.53) scale(0.93,1)" font-size="9.2" fill="#404040" text-anchor="start" font-weight="normal" font-style="normal">$1.3</text>
<text transform="translate(823.10,510.53) scale(0.93,1)" font-size="9.2" fill="#404040" text-anchor="start" font-weight="normal" font-style="normal">$1.3</text>
<text transform="translate(876.70,510.53) scale(0.93,1)" font-size="9.2" fill="#404040" text-anchor="start" font-weight="normal" font-style="normal">$1.3</text>
<text transform="translate(930.30,510.53) scale(0.93,1)" font-size="9.2" fill="#404040" text-anchor="start" font-weight="normal" font-style="normal">$1.3</text>
<text transform="translate(983.90,510.53) scale(0.93,1)" font-size="9.2" fill="#404040" text-anchor="start" font-weight="normal" font-style="normal">$1.3</text>
<text transform="translate(1037.50,510.53) scale(0.93,1)" font-size="9.2" fill="#404040" text-anchor="start" font-weight="normal" font-style="normal">$1.3</text>
<text transform="translate(1091.10,510.53) scale(0.93,1)" font-size="9.2" fill="#404040" text-anchor="start" font-weight="normal" font-style="normal">$1.3</text>
<text transform="translate(1144.70,510.53) scale(0.93,1)" font-size="9.2" fill="#404040" text-anchor="start" font-weight="normal" font-style="normal">$1.3</text>
<text transform="translate(707.10,546.50) scale(0.93,1)" font-size="9.2" fill="#595959" text-anchor="middle" font-weight="normal" font-style="normal">Jan-17</text>
<text transform="translate(760.70,546.50) scale(0.93,1)" font-size="9.2" fill="#595959" text-anchor="middle" font-weight="normal" font-style="normal">Feb-17</text>
<text transform="translate(814.30,546.50) scale(0.93,1)" font-size="9.2" fill="#595959" text-anchor="middle" font-weight="normal" font-style="normal">Mar-17</text>
<text transform="translate(867.90,546.50) scale(0.93,1)" font-size="9.2" fill="#595959" text-anchor="middle" font-weight="normal" font-style="normal">Apr-17</text>
<text transform="translate(921.50,546.50) scale(0.93,1)" font-size="9.2" fill="#595959" text-anchor="middle" font-weight="normal" font-style="normal">May-17</text>
<text transform="translate(975.10,546.50) scale(0.93,1)" font-size="9.2" fill="#595959" text-anchor="middle" font-weight="normal" font-style="normal">Jun-17</text>
<text transform="translate(1028.70,546.50) scale(0.93,1)" font-size="9.2" fill="#595959" text-anchor="middle" font-weight="normal" font-style="normal">Jul-17</text>
<text transform="translate(1082.30,546.50) scale(0.93,1)" font-size="9.2" fill="#595959" text-anchor="middle" font-weight="normal" font-style="normal">Aug-17</text>
<text transform="translate(1135.90,546.50) scale(0.93,1)" font-size="9.2" fill="#595959" text-anchor="middle" font-weight="normal" font-style="normal">Sep-17</text>
<circle cx="644.5" cy="223.6" r="4" fill="#fff" stroke="#7a7a7a" stroke-width="1.3"/>
<circle cx="991.5" cy="223.6" r="4" fill="#fff" stroke="#7a7a7a" stroke-width="1.3"/>
<circle cx="644.5" cy="403.6" r="4" fill="#fff" stroke="#7a7a7a" stroke-width="1.3"/>
<line x1="991.50" y1="203.50" x2="991.50" y2="219.60" stroke="#8c8c8c" stroke-width="1"/>
<path d="M996.6,195.2 A5.6,5.6 0 1 0 994.6,201.6" fill="none" stroke="#8c8c8c" stroke-width="3.8"/>
<path d="M996.6,195.2 A5.6,5.6 0 1 0 994.6,201.6" fill="none" stroke="#fff" stroke-width="1.8"/>
<path d="M994.2,195.4 L1002.2,195.4 L998.2,200.8 Z" fill="#fff" stroke="#7a7a7a" stroke-width="1.3"/>
<rect x="0.00" y="549.00" width="102.50" height="1.00" fill="#9a9a9a" stroke="none" stroke-width="1"/>
<rect x="165.00" y="549.00" width="1005.00" height="1.00" fill="#9a9a9a" stroke="none" stroke-width="1"/></svg>
</body></html>
